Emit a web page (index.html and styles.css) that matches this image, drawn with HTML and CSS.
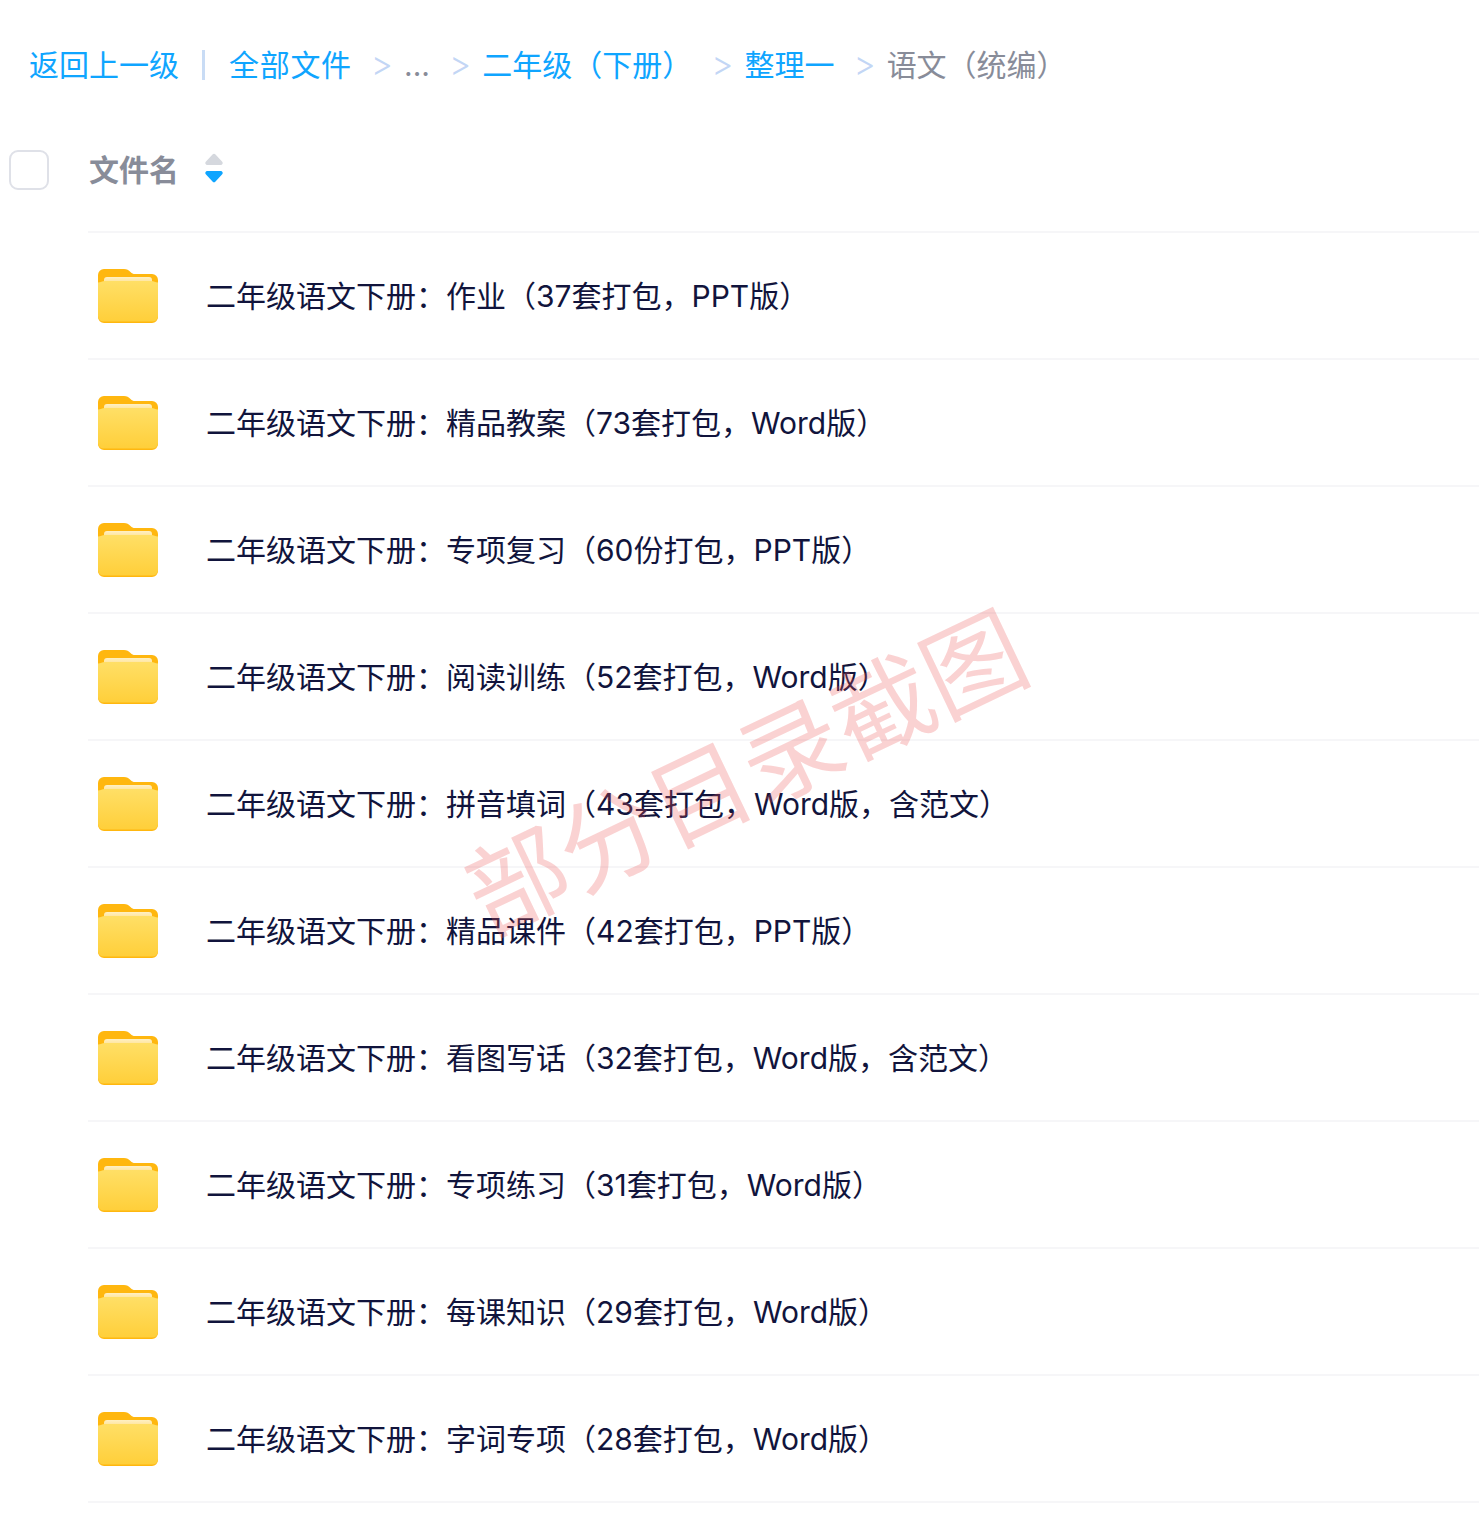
FILE: index.html
```html
<!DOCTYPE html>
<html lang="zh-CN">
<head>
  <meta charset="UTF-8">
  <title>语文（统编）</title>
  <link rel="stylesheet" href="styles.css">
</head>
<body>
  <svg class="defs" width="0" height="0" aria-hidden="true">
    <defs>
      <linearGradient id="folderFront" x1="0" y1="0" x2="0" y2="1">
        <stop offset="0" stop-color="#ffdf66"/>
        <stop offset="1" stop-color="#ffcf3a"/>
      </linearGradient>
      <linearGradient id="folderPaper" x1="0" y1="0" x2="0" y2="1">
        <stop offset="0" stop-color="#fff0c4"/>
        <stop offset="1" stop-color="#ffe08a"/>
      </linearGradient>
      <symbol id="folder" viewBox="0 0 60 54">
        <path d="M0 6a6 6 0 0 1 6-6h20c3 0 4.500 1 6.500 3 1.500 1.500 2.500 2 4.500 2h17a6 6 0 0 1 6 6v37a6 6 0 0 1-6 6H6a6 6 0 0 1-6-6z" fill="#ffb70f"/>
        <path d="M9 8h42a3 3 0 0 1 3 3v4H6v-4a3 3 0 0 1 3-3z" fill="url(#folderPaper)"/>
        <path d="M0 13.500c3 0 4-1.500 7-1.500h46c3 0 4 1.500 7 1.500V47a5.500 5.500 0 0 1-5.500 5.500h-49A5.500 5.500 0 0 1 0 47z" fill="url(#folderFront)"/>
      </symbol>
    </defs>
  </svg>

  <!-- Ruta de carpetas -->
  <nav class="crumbs">
    <a class="link">返回上一级</a>
    <span class="bar"></span>
    <a class="link all">全部文件</a>
    <span class="sep">&gt;</span>
    <span class="dots">...</span>
    <span class="sep">&gt;</span>
    <a class="link">二年级（下册）</a>
    <span class="sep">&gt;</span>
    <a class="link">整理一</a>
    <span class="sep">&gt;</span>
    <span class="current">语文（统编）</span>
  </nav>

  <div class="head">
    <span class="check"></span>
    <span class="head-name">文件名</span>
    <span class="sort">
      <svg width="18" height="30" viewBox="0 0 18 30">
        <path d="M7.500 1.500a2 2 0 0 1 3 0l6.500 7a2 2 0 0 1-1.500 3.500h-13a2 2 0 0 1-1.500-3.500z" fill="#d5d8de"/>
        <path d="M7.500 28.500a2 2 0 0 0 3 0l6.500-7a2 2 0 0 0-1.500-3.500h-13a2 2 0 0 0-1.500 3.500z" fill="#0fa5ff"/>
      </svg>
    </span>
  </div>

  <ul class="files">
    <li class="row"><svg class="folder"><use href="#folder"/></svg><span class="name">二年级语文下册：作业（37套打包，PPT版）</span></li>
    <li class="row"><svg class="folder"><use href="#folder"/></svg><span class="name">二年级语文下册：精品教案（73套打包，Word版）</span></li>
    <li class="row"><svg class="folder"><use href="#folder"/></svg><span class="name">二年级语文下册：专项复习（60份打包，PPT版）</span></li>
    <li class="row"><svg class="folder"><use href="#folder"/></svg><span class="name">二年级语文下册：阅读训练（52套打包，Word版）</span></li>
    <li class="row"><svg class="folder"><use href="#folder"/></svg><span class="name">二年级语文下册：拼音填词（43套打包，Word版，含范文）</span></li>
    <li class="row"><svg class="folder"><use href="#folder"/></svg><span class="name">二年级语文下册：精品课件（42套打包，PPT版）</span></li>
    <li class="row"><svg class="folder"><use href="#folder"/></svg><span class="name">二年级语文下册：看图写话（32套打包，Word版，含范文）</span></li>
    <li class="row"><svg class="folder"><use href="#folder"/></svg><span class="name">二年级语文下册：专项练习（31套打包，Word版）</span></li>
    <li class="row"><svg class="folder"><use href="#folder"/></svg><span class="name">二年级语文下册：每课知识（29套打包，Word版）</span></li>
    <li class="row"><svg class="folder"><use href="#folder"/></svg><span class="name">二年级语文下册：字词专项（28套打包，Word版）</span></li>
  </ul>

  <div class="watermark">部分目录截图</div>
</body>
</html>
```

FILE: styles.css
```css
body {
  margin: 0;
  height: 1515px;
  overflow: hidden;
  position: relative;
  background-color: #fff;
  font-family: "Inter", "Noto Sans CJK SC", sans-serif;
  font-size: 30px;
  color: #11143c;
}
.defs {
  position: absolute;
}
.crumbs {
  display: flex;
  align-items: center;
  height: 40px;
  padding: 45px 0 0 29px;
  line-height: 40px;
  white-space: nowrap;
}
.link {
  color: #0fa5ff;
}
.link.all {
  letter-spacing: 0.7px;
}
.bar {
  width: 3px;
  height: 30px;
  margin: 0 24px 0 23px;
  background-color: #c9dcf5;
}
.sep {
  margin: -2px 11px 0 19px;
  font-size: 34px;
  font-weight: 300;
  color: #c3d6f5;
}
.dots {
  font-size: 30px;
  color: #888c99;
}
.current {
  color: #888c99;
}
.head {
  display: flex;
  align-items: center;
  height: 40px;
  margin-top: 65px;
  padding-left: 9px;
}
.check {
  box-sizing: border-box;
  width: 40px;
  height: 40px;
  border: 2px solid #dfe1e8;
  border-radius: 9px;
}
.head-name {
  margin: -4px 0 0 40px;
  font-weight: 700;
  color: #888c99;
}
.sort {
  display: flex;
  margin: -5px 0 0 26px;
}
.files {
  list-style: none;
  margin: 41px 0 0 88px;
  padding: 0;
  border-top: 2px solid #f6f6f8;
}
.row {
  display: flex;
  align-items: center;
  box-sizing: border-box;
  height: 127px;
  padding-left: 10px;
  border-bottom: 2px solid #f6f6f8;
}
.folder {
  flex: none;
  width: 60px;
  height: 54px;
  margin-right: 48px;
}
.name {
  margin-bottom: 4px;
  white-space: nowrap;
}
.watermark {
  position: absolute;
  left: 743px;
  top: 767px;
  transform: translate(-50%, -50%) rotate(-25.5deg);
  font-family: "Noto Sans CJK SC", sans-serif;
  font-size: 101px;
  font-weight: 400;
  line-height: 1;
  white-space: nowrap;
  color: rgba(238, 90, 90, 0.27);
  pointer-events: none;
}
```
